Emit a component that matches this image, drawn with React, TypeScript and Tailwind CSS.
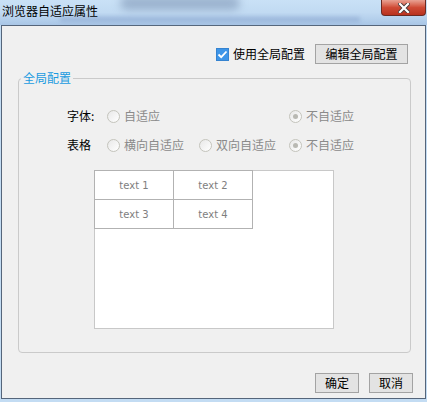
import React from 'react';

const font = { fontFamily: '"Noto Sans CJK SC", "Liberation Sans", sans-serif' };

const Radio = ({ checked, label }: { checked?: boolean; label: string }) => (
  <span className="flex items-center gap-[4px]">
    <span className="w-[13px] h-[13px] rounded-full border border-[#c4c4bc] bg-gradient-to-br from-[#e8e8e8] to-[#ffffff] flex items-center justify-center">
      {checked && <span className="w-[5px] h-[5px] rounded-full bg-[#b9b9b3]" />}
    </span>
    <span className="text-[12px] leading-[16px] text-[#8a8a8a]">{label}</span>
  </span>
);

const WinButton = ({ label, w }: { label: string; w: string }) => (
  <button className={`${w} h-[20px] border border-[#a3a3a3] bg-[#e3e3e3] text-[12px] leading-[16px] text-black flex items-center justify-center`}>
    {label}
  </button>
);

export default function App() {
  return (
    <div className="w-[427px] h-[402px] bg-[#c3dcf3] relative overflow-hidden flex flex-col" style={font}>
      {/* title bar */}
      <div className="relative h-[25px] bg-gradient-to-b from-[#c9e1f6] via-[#c1daf2] to-[#a9c6e6] flex items-start">
        <div className="absolute left-[120px] top-[-4px] w-[120px] h-[14px] rounded-full bg-[#6f86a8] opacity-50 blur-[4px]" />
        <div className="absolute left-[60px] top-[17px] w-[300px] h-[5px] bg-[#8aa6cf] opacity-60 blur-[2px]" />
        <span className="relative ml-[2px] mt-[3px] text-[12px] leading-[16px] text-black">浏览器自适应属性</span>
        <div className="absolute right-[1px] top-0 w-[45px] h-[16px] rounded-b-[4px] border border-t-0 border-[#6b2a22] bg-gradient-to-b from-[#e8a193] via-[#cf4a35] to-[#b8321f] flex items-center justify-center">
          <svg width="12" height="10" viewBox="0 0 12 10">
            <path d="M2 1 L10 9 M10 1 L2 9" stroke="#4a3a3a" strokeWidth="4" strokeLinecap="square" />
            <path d="M2 1 L10 9 M10 1 L2 9" stroke="#ffffff" strokeWidth="2.2" strokeLinecap="square" />
          </svg>
        </div>
      </div>

      {/* body */}
      <div className="ml-[1px] w-[425px] h-[374px] border border-[#55657a] bg-[#f0f0f0] flex flex-col">
        <div className="flex items-center justify-end pt-[18px] pr-[17px]">
          <span className="flex items-center gap-[4px]">
            <span className="w-[13px] h-[13px] bg-[#3d95e8] border border-[#3583d0] flex items-center justify-center">
              <svg width="11" height="9" viewBox="0 0 11 9">
                <path d="M1.5 4.5 L4.2 7.2 L9.5 1.5" fill="none" stroke="#ffffff" strokeWidth="1.8" />
              </svg>
            </span>
            <span className="text-[12px] leading-[16px] text-black">使用全局配置</span>
          </span>
          <div className="ml-[10px]">
            <WinButton label="编辑全局配置" w="w-[93px]" />
          </div>
        </div>

        <fieldset className="ml-[16px] mt-[6px] w-[393px] h-[283px] border border-[#cacaca] rounded-[4px] p-0 m-0">
          <legend className="ml-[2px] px-[2px] text-[12px] leading-[16px] text-[#1a9be0]">全局配置</legend>
          <div className="flex flex-col pl-[48px] mt-[22px]">
            <div className="flex items-center h-[16px]">
              <span className="w-[40px] text-[12px] leading-[16px] text-black">字体:</span>
              <span className="w-[182px]"><Radio label="自适应" /></span>
              <Radio checked label="不自适应" />
            </div>
            <div className="flex items-center h-[16px] mt-[13px]">
              <span className="w-[40px] text-[12px] leading-[16px] text-black">表格</span>
              <span className="w-[92px]"><Radio label="横向自适应" /></span>
              <span className="w-[90px]"><Radio label="双向自适应" /></span>
              <Radio checked label="不自适应" />
            </div>
            <div className="mt-[17px] ml-[27px] w-[240px] h-[159px] bg-white border border-[#c8c8c8]">
              <div className="-ml-px -mt-px grid grid-cols-[79px_79px] w-[159px] border-l border-t border-[#b2b2b2]">
                {['text 1', 'text 2', 'text 3', 'text 4'].map(t => (
                  <div key={t} className="h-[29px] border-r border-b border-[#b2b2b2] flex items-center justify-center text-[10px] text-[#7e7e7e]" style={{ fontFamily: '"DejaVu Sans", sans-serif' }}>
                    {t}
                  </div>
                ))}
              </div>
            </div>
          </div>
        </fieldset>

        <div className="flex justify-end gap-[10px] pr-[12px] mt-[20px]">
          <WinButton label="确定" w="w-[44px]" />
          <WinButton label="取消" w="w-[44px]" />
        </div>
      </div>
    </div>
  );
}
